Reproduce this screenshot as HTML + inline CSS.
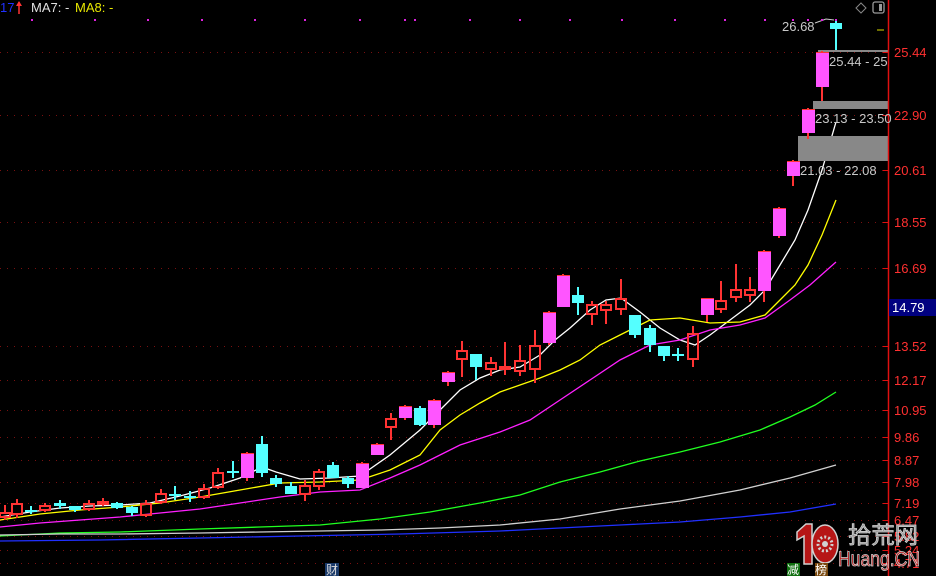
<!DOCTYPE html>
<html><head><meta charset="utf-8"><style>
body{margin:0;background:#000;width:936px;height:576px;overflow:hidden;font-family:"Liberation Sans","Noto Sans CJK SC",sans-serif}
svg{position:absolute;left:0;top:0}
</style></head><body>
<svg id="s" width="936" height="576" xmlns="http://www.w3.org/2000/svg">
<rect width="936" height="576" fill="#000"/>
<g id="grid"></g>
<g id="ma"></g>
<g id="boxes">
<line x1="818" y1="51" x2="888" y2="51" stroke="#888" stroke-width="2"/>
<rect x="813" y="101" width="75" height="8" fill="#888"/>
<rect x="798" y="136" width="90" height="25" fill="#888"/>
</g>
<g id="c"></g>
<line x1="888.5" y1="0" x2="888.5" y2="576" stroke="#e01010" stroke-width="1.5"/>
<g id="ax" font-size="13" fill="#ff3030"></g>
<rect x="889" y="299" width="47" height="17" fill="#000080"/>
<text x="892" y="312" font-size="13" fill="#fff">14.79</text>
<g font-size="13" fill="#c8c8c8">
<text x="782" y="31">26.68</text>
<text x="829" y="66">25.44 - 25</text>
<text x="815" y="123">23.13 - 23.50</text>
<text x="800" y="175">21.03 - 22.08</text>
</g>
<polyline points="815,23 826,19 834,20" fill="none" stroke="#ccc" stroke-width="1"/>
<line x1="877" y1="30" x2="884" y2="30" stroke="#dd0" stroke-width="1"/>
<text x="0" y="12" font-size="13" fill="#2030ff">17</text>
<line x1="19" y1="2" x2="19" y2="14" stroke="#f33" stroke-width="1.5"/><path d="M16,6 L19,1 L22,6Z" fill="#f33"/>
<text x="31" y="12" font-size="13" fill="#e0e0e0">MA7: -</text>
<text x="75" y="12" font-size="13" fill="#e8e800">MA8: -</text>
<path d="M856,8 l5,-5 l5,5 l-5,5z" fill="none" stroke="#888"/>
<rect x="873" y="2" width="11" height="11" rx="2" fill="none" stroke="#999" stroke-width="1.3"/><rect x="879" y="4" width="3" height="7" fill="#999"/>
<g id="dots" fill="#e020e0"></g>
<rect x="325" y="563" width="14" height="13" fill="#1a3a6a"/>
<text x="326" y="574" font-size="12" fill="#ddd">财</text>
<g opacity="0.95">
<path d="M797,532 L806,524 L812,524 L812,564 L804,564 L804,536 L797,540Z" fill="#c01818" stroke="#ddd" stroke-width="1.5"/>
<ellipse cx="825" cy="544" rx="13" ry="19" fill="#c01818" stroke="#ddd" stroke-width="1.5"/>
<circle cx="825" cy="544" r="7" fill="none" stroke="#ddd" stroke-width="3" stroke-dasharray="2 2"/>
<circle cx="825" cy="544" r="3" fill="#ddd"/>
<text x="848" y="543" font-size="23" fill="#999" stroke="#ddd" stroke-width="0.8" textLength="70" lengthAdjust="spacingAndGlyphs">拾荒网</text>
<text x="838" y="566" font-size="21" fill="#c01818" stroke="#ddd" stroke-width="0.8" textLength="82" lengthAdjust="spacingAndGlyphs">Huang.CN</text>
</g>
<rect x="787" y="563" width="13" height="13" fill="#107010"/>
<text x="787" y="574" font-size="12" fill="#fff">减</text>
<rect x="815" y="563" width="13" height="13" fill="#7a4a10"/>
<text x="815" y="574" font-size="12" fill="#fff">榜</text>
</svg>
<script>
var NS="http://www.w3.org/2000/svg";
function el(p,t,a){var e=document.createElementNS(NS,t);for(var k in a)e.setAttribute(k,a[k]);document.getElementById(p).appendChild(e);return e;}
var lv=[[25.44,52],[22.90,115],[20.61,170],[18.55,222],[16.69,268],[13.52,346],[12.17,380],[10.95,410],[9.86,437],[8.87,460],[7.98,482],[7.19,503],[6.47,520],[5.82,536],[5.24,550],[4.71,563]];
lv.forEach(function(l){el("grid","line",{x1:0,y1:l[1]+0.5,x2:888,y2:l[1]+0.5,stroke:"#7a1010","stroke-dasharray":"1 6"});el("grid","line",{x1:883,y1:l[1]+0.5,x2:888,y2:l[1]+0.5,stroke:"#e01010"});var t=el("ax","text",{x:894,y:l[1]+5});t.textContent=l[0].toFixed(2);});
var C=[[5,512,518,505,520,'r'],[17,503,515,499,518,'r'],[31,510,511,506,514,'c'],[45,505,511,503,512,'r'],[60,503,506,500,509,'c'],[75,506,510,506,512,'c'],[89,503,510,500,511,'r'],[103,501,505,498,506,'r'],[117,503,508,502,509,'c'],[132,507,513,506,516,'c'],[146,503,516,500,517,'r'],[161,493,503,489,504,'r'],[175,494,495,486,500,'c'],[190,496,497,491,502,'c'],[204,488,498,484,499,'r'],[218,472,488,468,489,'r'],[233,471,472,461,478,'c'],[247,453,478,452,481,'m'],[262,444,473,436,477,'c'],[276,478,484,475,487,'c'],[291,486,494,482,494,'c'],[305,485,495,480,501,'r'],[319,471,487,469,490,'r'],[333,465,478,462,478,'c'],[348,478,484,476,488,'c'],[362,463,488,462,488,'m'],[377,444,455,443,455,'m'],[391,418,428,413,440,'r'],[405,406,418,405,420,'m'],[420,408,425,406,426,'c'],[434,400,425,399,428,'m'],[448,372,382,371,386,'m'],[462,350,360,341,377,'r'],[476,354,367,354,380,'c'],[491,362,370,357,376,'r'],[505,366,370,342,375,'r'],[520,360,372,345,376,'r'],[535,345,370,330,383,'r'],[549,312,343,311,345,'m'],[563,275,307,274,307,'m'],[578,295,303,287,315,'c'],[592,304,315,301,325,'r'],[606,304,311,301,324,'r'],[621,298,310,279,315,'r'],[635,315,335,315,338,'c'],[650,328,345,325,352,'c'],[664,346,356,346,361,'c'],[678,354,356,348,361,'c'],[693,333,360,326,367,'r'],[707,298,315,298,322,'m'],[721,300,310,281,313,'r'],[736,289,298,264,302,'r'],[750,289,296,277,302,'r'],[764,251,291,250,302,'m'],[779,208,236,207,238,'m'],[793,161,176,160,186,'m'],[808,109,133,108,139,'m'],[822,52,87,51,101,'m'],[836,23,29,20,50,'c']];
C.forEach(function(c){var x=c[0],t=c[5];var top=Math.min(c[1],c[2]),h=Math.max(Math.abs(c[2]-c[1]),1);
var col=t=='c'?'#54ffff':'#ff3333';
if(t=='m'){el("c","line",{x1:x,y1:c[3],x2:x,y2:c[4],stroke:'#ff3333','stroke-width':2});el("c","rect",{x:x-6,y:top,width:13,height:h,fill:'#ff55ff'});el("c","line",{x1:x-6,y1:top+0.5,x2:x+7,y2:top+0.5,stroke:'#ff3333'});}
else if(t=='c'){el("c","line",{x1:x,y1:c[3],x2:x,y2:c[4],stroke:col,'stroke-width':2});el("c","rect",{x:x-6,y:top,width:12,height:Math.max(h,2),fill:col});}
else{el("c","line",{x1:x,y1:c[3],x2:x,y2:top,stroke:col,'stroke-width':2});el("c","line",{x1:x,y1:top+h,x2:x,y2:c[4],stroke:col,'stroke-width':2});el("c","rect",{x:x-5,y:top+1,width:10,height:Math.max(h-2,1),fill:'none',stroke:col,'stroke-width':2});}
});
function pl(pts,col){el("ma","polyline",{points:pts,fill:"none",stroke:col,'stroke-width':1.3});}
pl("0,517 30,512 60,508 90,506 120,505 150,503 180,496 210,488 240,478 262,467 276,472 300,479 330,478 360,476 390,455 420,430 440,410 460,390 480,378 500,370 520,367 540,355 555,340 570,328 590,310 606,300 621,298 640,312 660,328 680,340 695,345 710,335 730,320 750,305 765,290 780,265 795,240 808,210 822,170 836,122","#ffffff");
pl("0,520 40,514 80,510 120,507 160,503 200,497 240,490 280,483 320,482 360,480 390,470 420,455 440,430 460,415 480,403 500,392 520,385 540,378 560,370 580,360 600,345 620,335 650,320 680,318 710,323 740,322 765,315 780,300 795,285 808,265 822,235 836,200","#ffff00");
pl("0,527 40,523 80,520 120,517 160,513 200,509 240,503 280,497 320,492 360,490 390,478 420,465 440,455 460,445 500,432 530,420 560,400 590,380 620,360 650,345 680,340 710,330 740,325 765,318 790,300 810,285 836,262","#ff20ff");
pl("0,536 60,533 120,532 200,529 260,527 320,525 380,519 430,512 480,503 520,495 560,482 600,472 640,461 680,452 720,442 760,430 790,417 815,405 836,392","#20ff20");
pl("0,535 60,534 120,534 200,533 260,532 320,531 380,530 440,528 500,525 560,519 620,509 680,501 740,490 790,478 836,465","#d0d0d0");
pl("0,541 100,540 200,538 300,536 400,534 500,531 560,528 620,525 680,522 740,517 790,512 836,504","#2030ff");
[32,95,148,202,255,305,360,415,470,520,570,622,675,725,765,793,808,822,836,405].forEach(function(x){el("dots","rect",{x:x-1,y:19,width:2,height:2});});
</script>
</body></html>
